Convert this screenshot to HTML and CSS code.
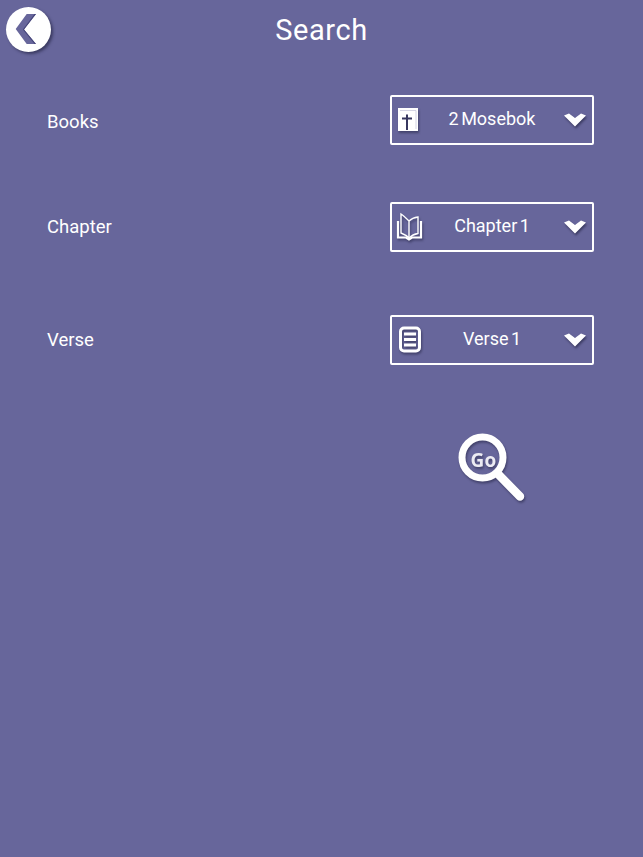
FILE: index.html
```html
<!DOCTYPE html>
<html lang="en">
<head>
    <meta charset="UTF-8">
    <meta name="viewport" content="width=device-width, initial-scale=1.0">
    <title>Search</title>
    <link rel="stylesheet" href="styles.css">
</head>
<body>
    <header class="topbar">
        <button class="back-button" aria-label="Back">
            <svg width="45" height="45" viewBox="0 0 45 45">
                <path class="back-chevron" d="M20.7 7 H30 L18 22.5 L30 37 H20.7 L9.7 22 Z"/>
                <path class="back-chevron-edge" d="M30 7 L18 22.5 L30 37 H28.5 L16.8 22.5 L28.5 7 Z"/>
            </svg>
        </button>
        <h1 class="title">Search</h1>
    </header>

    <main class="form">
        <div class="row row-books">
            <span class="row-label">Books</span>
            <div class="picker">
                <svg class="picker-icon" width="26" height="30" viewBox="0 0 26 30">
                    <path d="M3 3 H23 V26 H3 Z" fill="#fff"/>
                    <path d="M5 5.5 H21 V24" fill="none" stroke="#c9c9dc" stroke-width="0.8"/>
                    <path d="M12 9.5 V25 M7 13.5 H17" stroke="#37375f" stroke-width="2" fill="none"/>
                </svg>
                <span class="picker-text">2 Mosebok</span>
                <svg class="picker-arrow" width="24" height="16" viewBox="0 0 24 16">
                    <path d="M1 3.5 L6 1.5 L12 6 L18 1.5 L23 3.5 L12 14.5 Z" fill="#fff"/>
                </svg>
            </div>
        </div>

        <div class="row row-chapter">
            <span class="row-label">Chapter</span>
            <div class="picker">
                <svg class="picker-icon" width="28" height="30" viewBox="0 0 28 30">
                    <g fill="none" stroke="#fff">
                        <path d="M14 9 C11 6 8.5 3.5 6 2 V21 C8.5 22 11.5 23.5 14 26 Z" stroke-width="1.4"/>
                        <path d="M14 9 C16 7 19 5.5 23 5 V21.5 C19.5 22 16.5 23.5 14 26" stroke-width="1.4"/>
                        <path d="M3 9 V25.5 H11 L14 27.5 L17 25.5 H26 V9" stroke-width="2.2"/>
                    </g>
                </svg>
                <span class="picker-text picker-text-chapter">Chapter 1</span>
                <svg class="picker-arrow" width="24" height="16" viewBox="0 0 24 16">
                    <path d="M1 3.5 L6 1.5 L12 6 L18 1.5 L23 3.5 L12 14.5 Z" fill="#fff"/>
                </svg>
            </div>
        </div>

        <div class="row row-verse">
            <span class="row-label">Verse</span>
            <div class="picker">
                <svg class="picker-icon" width="26" height="30" viewBox="0 0 26 30">
                    <rect x="5.5" y="3" width="19" height="23" rx="3.5" fill="none" stroke="#fff" stroke-width="3"/>
                    <path d="M9 9 H21 M9 14.5 H21 M9 20 H21" stroke="#fff" stroke-width="2.8"/>
                </svg>
                <span class="picker-text">Verse 1</span>
                <svg class="picker-arrow" width="24" height="16" viewBox="0 0 24 16">
                    <path d="M1 3.5 L6 1.5 L12 6 L18 1.5 L23 3.5 L12 14.5 Z" fill="#fff"/>
                </svg>
            </div>
        </div>

        <div class="go-row">
            <button class="go-button" aria-label="Go">
                <svg width="70" height="72" viewBox="0 0 70 72">
                    <circle cx="26.5" cy="26.5" r="20.5" fill="none" stroke="#fff" stroke-width="7"/>
                    <path d="M43 44 L64 65.5" stroke="#fff" stroke-width="8.5" stroke-linecap="round"/>
                </svg>
                <span class="go-text">Go</span>
            </button>
        </div>
    </main>
</body>
</html>
```

FILE: styles.css
```css
body {
    font-family: 'Roboto', 'Liberation Sans', sans-serif;
    margin: 0;
    padding: 0;
    background-color: #67669b;
    color: #fff;
    height: 857px;
    overflow: hidden;
}

.topbar {
    position: relative;
    height: 58px;
    display: flex;
    align-items: center;
    justify-content: center;
}

.title {
    margin: 0;
    padding-top: 2px;
    font-size: 29px;
    font-weight: 400;
    letter-spacing: 0.6px;
}

.back-button {
    position: absolute;
    left: 6px;
    top: 7px;
    width: 45px;
    height: 45px;
    padding: 0;
    border: none;
    border-radius: 50%;
    background-color: #fff;
    box-shadow: 2px 2px 3px rgba(30, 30, 60, 0.6);
}

.back-button svg {
    display: block;
}

.back-chevron {
    fill: #67669b;
}

.back-chevron-edge {
    fill: #46467a;
}

.form {
    padding: 0 49px 0 47px;
}

.row {
    display: flex;
    align-items: center;
    justify-content: space-between;
}

.row-books {
    margin-top: 37px;
}

.row-chapter {
    margin-top: 57px;
}

.row-verse {
    margin-top: 63px;
}

.row-label {
    font-size: 18.5px;
}

.row-books .row-label {
    position: relative;
    top: 2px;
}

.picker {
    width: 200px;
    height: 46px;
    border: 2px solid #fff;
    border-radius: 2px;
    display: flex;
    align-items: center;
}

.picker-icon {
    margin-left: 3px;
    flex: none;
    filter: drop-shadow(1px 2px 1px rgba(30, 30, 60, 0.5));
}

.picker-text {
    flex: 1;
    text-align: center;
    font-size: 18px;
    word-spacing: -2px;
    padding-bottom: 3px;
}

.picker-text-chapter {
    padding-right: 2px;
}

.picker-arrow {
    margin-right: 5px;
    flex: none;
    filter: drop-shadow(1px 2px 1px rgba(30, 30, 60, 0.6));
}

.go-row {
    display: flex;
    justify-content: flex-end;
    padding-right: 68px;
    margin-top: 66px;
}

.go-button {
    position: relative;
    width: 70px;
    height: 72px;
    padding: 0;
    border: none;
    background: none;
    color: #fff;
    filter: drop-shadow(1px 2px 1px rgba(30, 30, 60, 0.5));
}

.go-button svg {
    display: block;
}

.go-text {
    position: absolute;
    left: 0;
    top: 0;
    width: 55px;
    line-height: 58px;
    text-align: center;
    font-family: 'Open Sans', sans-serif;
    font-size: 19px;
    font-weight: 700;
    letter-spacing: 0.3px;
    color: #ecebf3;
}
```
